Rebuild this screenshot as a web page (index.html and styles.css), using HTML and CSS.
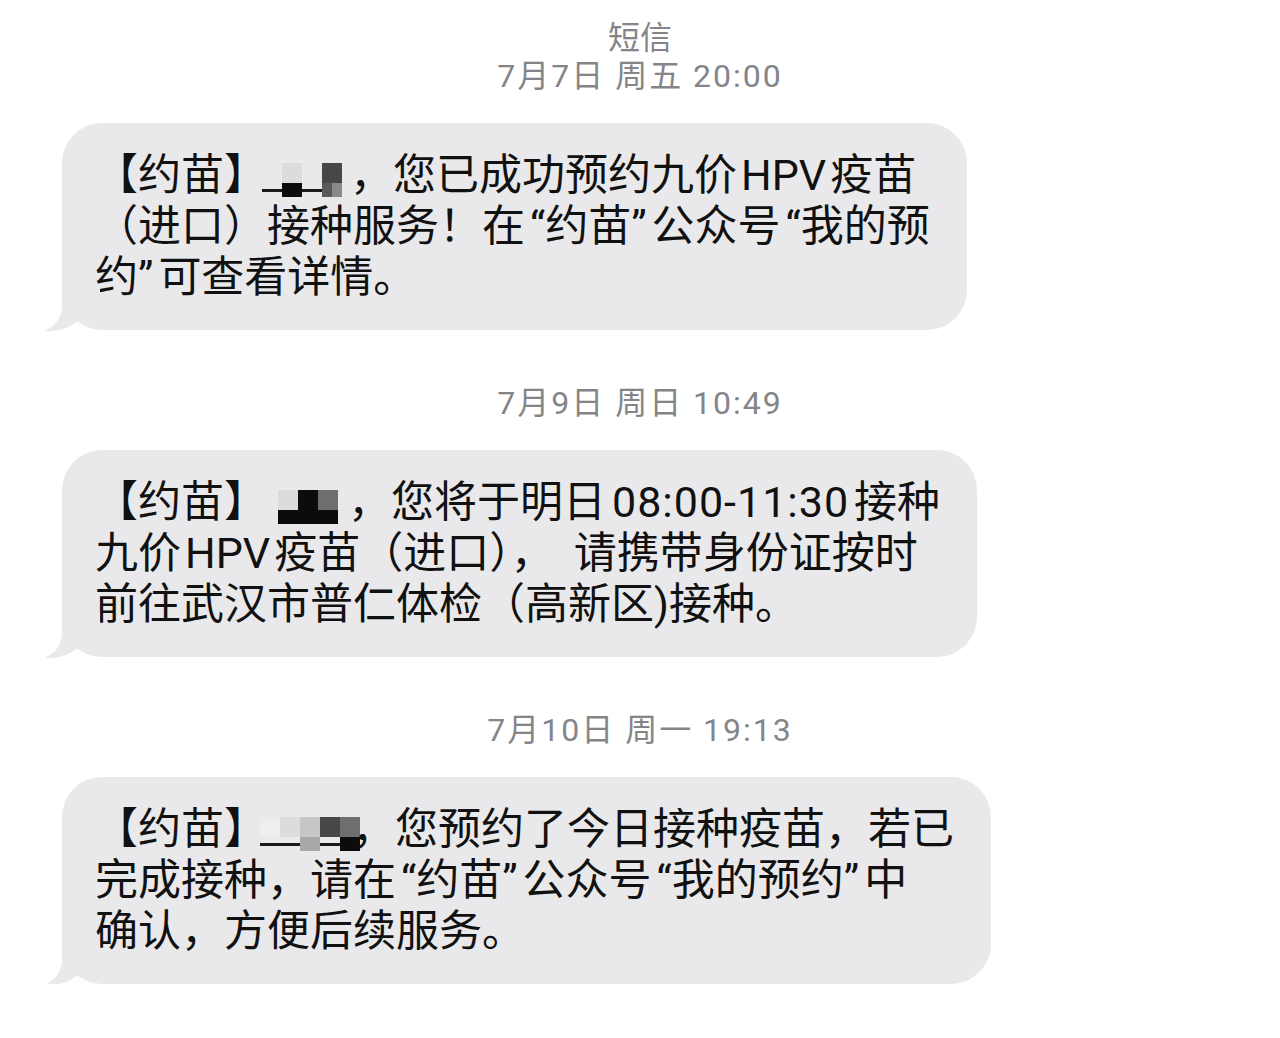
FILE: index.html
```html
<!DOCTYPE html>
<html lang="zh-CN">
<head>
<meta charset="utf-8">
<link rel="stylesheet" href="styles.css">
</head>
<body>
<div class="thread">
  <div class="title">短信</div>
  <div class="stamp">7月7日 周五 20:00</div>
  <div class="row">
    <div class="bubble">
      【约苗】<span class="mosaic m1"><span class="grid"><i class="c-t"></i><i class="c-s1"></i><i class="c-l"></i><i class="c-k"></i><i class="c-t"></i><i class="c-s1"></i><i class="c-d"></i><i class="c-gk"></i></span></span>，您已成功预约九价<span class="lat">HPV</span>疫苗<br>（进口）接种服务！在<span class="qo">“</span>约苗<span class="qc">”</span>公众号<span class="qo">“</span>我的预<br>约<span class="qc">”</span>可查看详情。
      <svg class="tail" width="60" height="50" viewBox="0 0 60 50"><path d="M20 4 L20 23 C20 36 13 45 2 49 C14 50 26 47 36 39 L58 20 L58 4 Z"/></svg>
    </div>
  </div>
  <div class="stamp gap">7月9日 周日 10:49</div>
  <div class="row">
    <div class="bubble">
      【约苗】<span class="mosaic m2"><span class="grid"><i class="c-l"></i><i class="c-k"></i><i class="c-k"></i><i class="c-k"></i><i class="c-g"></i><i class="c-k"></i></span></span>，您将于明日<span class="num">08:00-11:30</span>接种<br>九价<span class="lat">HPV</span>疫苗（进口），<span class="wide"></span>请携带身份证按时<br>前往武汉市普仁体检（高新区)接种。
      <svg class="tail" width="60" height="50" viewBox="0 0 60 50"><path d="M20 4 L20 23 C20 36 13 45 2 49 C14 50 26 47 36 39 L58 20 L58 4 Z"/></svg>
    </div>
  </div>
  <div class="stamp gap">7月10日 周一 19:13</div>
  <div class="row">
    <div class="bubble">
      【约苗】<span class="mosaic m3"><span class="grid"><i class="c-x"></i><i class="c-s1"></i><i class="c-l"></i><i class="c-s1"></i><i class="c-s"></i><i class="c-m"></i><i class="c-d"></i><i class="c-s1"></i><i class="c-g"></i><i class="c-k"></i></span></span>，您预约了今日接种疫苗，若已<br>完成接种，请在<span class="qo">“</span>约苗<span class="qc">”</span>公众号<span class="qo">“</span>我的预约<span class="qc">”</span>中<br>确认，方便后续服务。
      <svg class="tail" width="60" height="50" viewBox="0 0 60 50"><path d="M20 4 L20 23 C20 36 13 45 2 49 C14 50 26 47 36 39 L58 20 L58 4 Z"/></svg>
    </div>
  </div>
</div>
</body>
</html>
```

FILE: styles.css
```css
html, body {
  margin: 0;
  padding: 0;
  background: #ffffff;
}

.thread {
  width: 1280px;
  padding-top: 19px;
  font-family: Roboto, "Noto Sans CJK SC", sans-serif;
}

.title {
  text-align: center;
  font-size: 32px;
  line-height: 38px;
  color: #858589;
}

.stamp {
  text-align: center;
  font-size: 32px;
  line-height: 38px;
  letter-spacing: 2px;
  color: #858589;
}

.stamp.gap {
  margin-top: 54px;
}

.row {
  margin-top: 28px;
  padding-left: 62px;
}

.bubble {
  position: relative;
  display: inline-block;
  background: #e9e9eb;
  border-radius: 40px;
  padding: 27px 37px 27px 33px;
  font-size: 43px;
  line-height: 51px;
  color: #111111;
}

.tail {
  position: absolute;
  left: -20px;
  bottom: -2px;
  fill: #e9e9eb;
}

.lat {
  margin: 0 4px;
}

.qo {
  margin-left: 5px;
}

.qc {
  margin-right: 5px;
}

.num {
  letter-spacing: 1px;
  margin: 0 5px 0 6px;
}

.wide {
  display: inline-block;
  width: 20px;
}

.mosaic {
  display: inline-block;
  height: 34px;
  overflow: hidden;
  vertical-align: -7px;
  line-height: 0;
}

.grid {
  display: grid;
  grid-auto-flow: column;
  grid-template-rows: 20px 14px;
  grid-auto-columns: 20px;
}

.grid i {
  display: block;
}

.m1 { margin-left: -5px; margin-right: 8px; }
.m2 { margin-left: 11px; margin-right: 10px; }
.m3 { margin-left: -7px; margin-right: -8px; }

.c-t { background: transparent; }
.c-x { background: #eeeeee; }
.c-l { background: #dcdcdc; }
.c-s { background: #c6c6c6; }
.c-m { background: #a8a8a8; }
.c-g { background: #6e6e6e; }
.c-d { background: #474747; }
.c-k { background: #0c0c0c; }
.c-gk { background: linear-gradient(to right, #5a5a5a 50%, #8a8a8a 50%); }
.c-s1 { background: linear-gradient(to bottom, transparent 40%, #1a1a1a 40%, #1a1a1a 62%, transparent 62%); }
```
